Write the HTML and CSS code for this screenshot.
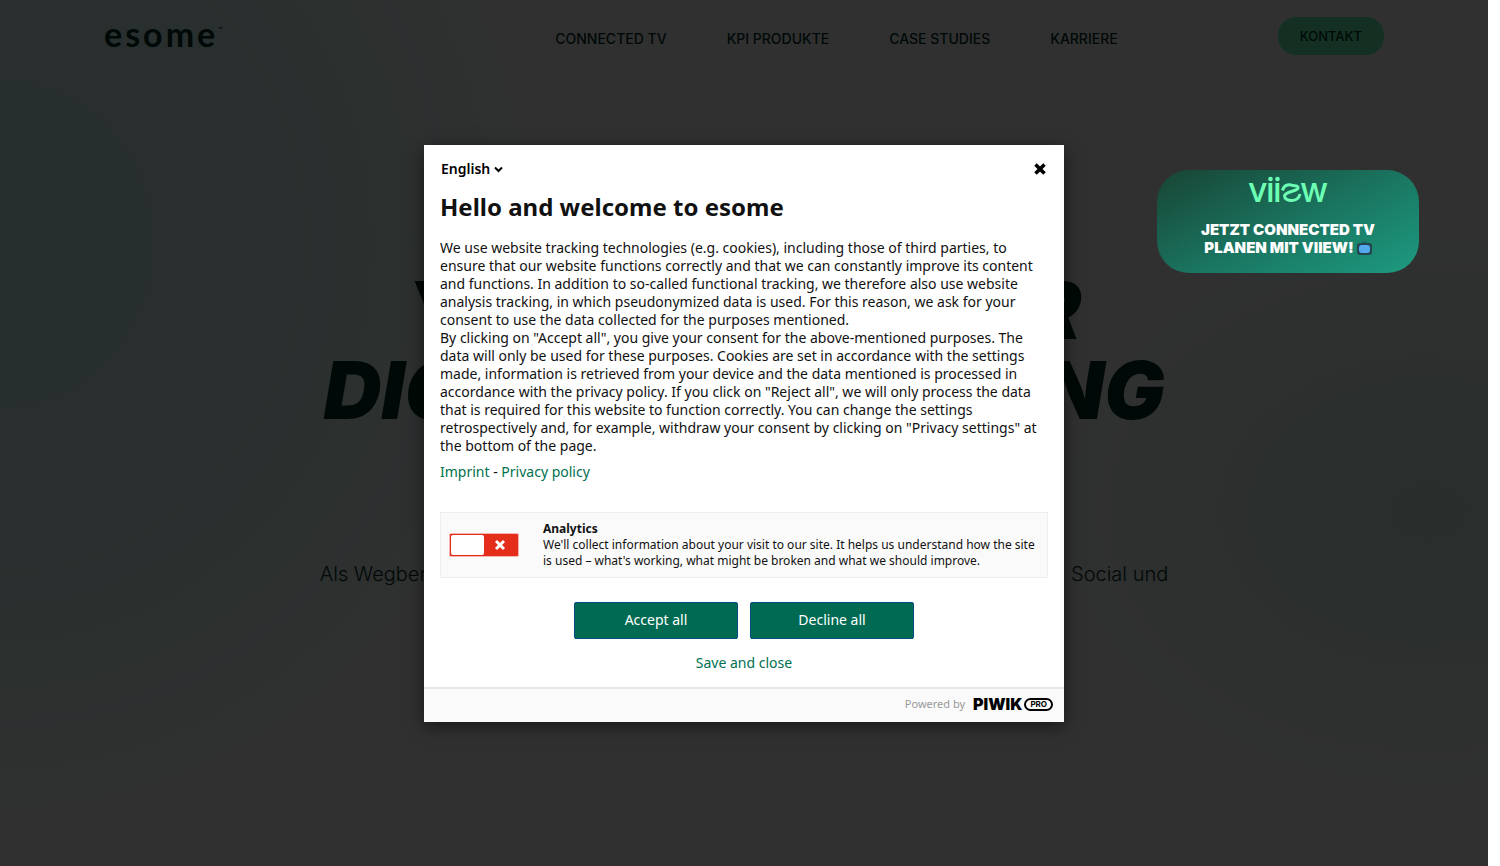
FILE: index.html
```html
<!DOCTYPE html>
<html lang="de">
<head>
    <meta charset="UTF-8">
    <meta name="viewport" content="width=device-width, initial-scale=1.0">
    <title>esome</title>
    <link rel="stylesheet" href="styles.css">
</head>
<body>
    <div class="page">
        <header class="header">
            <a class="logo" href="#">esome<sup>™</sup></a>
            <nav class="nav">
                <a href="#">CONNECTED TV</a>
                <a href="#">KPI PRODUKTE</a>
                <a href="#">CASE STUDIES</a>
                <a href="#">KARRIERE</a>
            </nav>
            <a class="contact" href="#">KONTAKT</a>
        </header>
        <main class="hero">
            <h1>YOUR GUIDE FOR<br>DIGITAL MARKETING</h1>
            <p>Als Wegbereiter der digitalen Werbung verbinden wir Connected TV, Video, Paid Social und</p>
        </main>

        <div class="overlay">
            <div class="modal" role="dialog" aria-labelledby="consent-title" lang="en">
                <div class="modal-body">
                    <div class="modal-top">
                        <div class="language">
                            <select aria-label="Language">
                                <option>English</option>
                            </select>
                            <svg width="9" height="7" viewBox="0 0 9 7"><path d="M1 1.5l3.5 3.5 3.5-3.5" fill="none" stroke="#000" stroke-width="2"/></svg>
                        </div>
                        <button class="close" type="button" aria-label="Close">
                            <svg width="12" height="12" viewBox="0 0 12 12"><path d="M1.5 1.5l9 9M10.5 1.5l-9 9" stroke="#000" stroke-width="3.6"/></svg>
                        </button>
                    </div>
                    <h2 id="consent-title">Hello and welcome to esome</h2>
                    <p class="text">We use website tracking technologies (e.g. cookies), including those of third parties, to ensure that our website functions correctly and that we can constantly improve its content and functions. In addition to so-called functional tracking, we therefore also use website analysis tracking, in which pseudonymized data is used. For this reason, we ask for your consent to use the data collected for the purposes mentioned.<br>By clicking on "Accept all", you give your consent for the above-mentioned purposes. The data will only be used for these purposes. Cookies are set in accordance with the settings made, information is retrieved from your device and the data mentioned is processed in accordance with the privacy policy. If you click on "Reject all", we will only process the data that is required for this website to function correctly. You can change the settings retrospectively and, for example, withdraw your consent by clicking on "Privacy settings" at the bottom of the page.</p>
                    <p class="links"><a href="#">Imprint</a> - <a href="#">Privacy policy</a></p>
                    <div class="consent">
                        <label class="switch" for="analytics">
                            <input id="analytics" type="checkbox" aria-label="Analytics">
                            <span class="knob"></span>
                            <svg width="12" height="12" viewBox="0 0 12 12"><path d="M2 2l8 8M10 2l-8 8" stroke="#fff" stroke-width="3"/></svg>
                        </label>
                        <div class="consent-text">
                            <h3>Analytics</h3>
                            <p>We'll collect information about your visit to our site. It helps us understand how the site is used – what's working, what might be broken and what we should improve.</p>
                        </div>
                    </div>
                    <div class="buttons">
                        <button type="button">Accept all</button>
                        <button type="button">Decline all</button>
                    </div>
                    <button class="save" type="button">Save and close</button>
                </div>
                <footer class="modal-footer">
                    <span>Powered by</span>
                    <a class="piwik" href="#">PIWIK<span class="pro">PRO</span></a>
                </footer>
            </div>
        </div>

        <a class="viiew" href="#">
            <svg class="viiew-logo" width="80" height="44" viewBox="0 -6 80 44" role="img" aria-label="viiew">
                <g font-family="Inter, sans-serif" font-size="34" font-weight="500" fill="#6dffb4">
                    <text x="0" y="26">v</text>
                    <text x="18" y="26">ı</text>
                    <text x="25" y="26">ı</text>
                    <text x="52" y="26">w</text>
                </g>
                <circle cx="22.5" cy="3" r="2.3" fill="#6dffb4"/>
                <circle cx="29.5" cy="3" r="2.3" fill="#6dffb4"/>
                <path d="M34.500 14.500C36 9 40 8 43 9C46 10.500 50 8.500 50 12C49.500 15.500 37 15 36.500 20C36.500 23 40 24.600 44 24.500C48 24.400 51 22 52 18" fill="none" stroke="#6dffb4" stroke-width="3"/>
            </svg>
            <span>JETZT CONNECTED TV</span>
            <span>PLANEN MIT VIIEW!
                <svg width="15" height="15" viewBox="0 0 15 15"><path d="M5 0l2 2 3-2" fill="none" stroke="#24505a"/><rect y="2" width="15" height="12" rx="3" fill="#234650"/><rect x="2" y="4" width="11" height="8" rx="3" fill="#55a9ee"/></svg>
            </span>
        </a>
    </div>
</body>
</html>
```
FILE: styles.css
```css
* {
    box-sizing: border-box;
}
body {
    margin: 0;
    /* scrollbar gutter */
    padding-right: 12px;
    background-color: white;
    font-family: Inter, sans-serif;
}
a {
    text-decoration: none;
    color: inherit;
}
button {
    font-family: inherit;
    cursor: pointer;
}
h1, h2, h3, p {
    margin: 0;
}
.page {
    position: relative;
    min-height: 100vh;
    overflow: hidden;
    color: #003328;
    background:
        radial-gradient(ellipse 560px 600px at 0% 28%, #c8f8f0, rgba(200, 248, 240, 0.7) 50%, rgba(255, 255, 255, 0)),
        radial-gradient(ellipse 400px 300px at 96% 59%, #d0f5e6, rgba(255, 255, 255, 0)),
        white;
}

/* header */
.header {
    display: flex;
    align-items: center;
    height: 72px;
    padding: 0 104px;
}
.logo {
    padding-bottom: 4px;
    font-family: Lato, sans-serif;
    font-size: 34px;
    line-height: 40px;
    font-weight: 700;
    letter-spacing: 3px;
}
.logo sup {
    font-size: 6px;
    line-height: 0;
    letter-spacing: 0;
    vertical-align: 16px;
}
.nav {
    display: flex;
    gap: 60px;
    margin-left: auto;
    margin-right: 160px;
    padding-top: 4px;
    font-size: 14px;
    font-weight: 500;
}
.contact {
    padding: 11px 22px;
    border-radius: 18px;
    background-color: #6cffb8;
    font-size: 13px;
    font-weight: 500;
    line-height: 16px;
}

/* hero */
.hero {
    padding-top: 198px;
    text-align: center;
}
.hero h1 {
    font-size: 80px;
    line-height: 80px;
    font-weight: 900;
    font-style: italic;
    white-space: nowrap;
}
.hero p {
    margin-top: 132px;
    font-size: 20px;
    line-height: 24px;
    font-weight: 300;
}

/* consent dialog */
.overlay {
    position: absolute;
    inset: 0;
    display: flex;
    align-items: center;
    justify-content: center;
    background-color: rgba(0, 0, 0, 0.81);
}
.modal {
    width: 640px;
    max-width: 100%;
    margin-top: 1px;
    background-color: white;
    box-shadow: 0 4px 16px rgba(0, 0, 0, 0.5);
    color: #111;
    font-family: "Noto Sans", sans-serif;
    font-size: 14px;
    line-height: 18px;
}
.modal-body {
    padding: 15px 16px 14px;
}
.modal-top {
    display: flex;
    align-items: center;
    justify-content: space-between;
    height: 18px;
}
.language {
    display: flex;
    align-items: center;
    gap: 3px;
}
.language select {
    appearance: none;
    border: none;
    padding: 0 0 0 1px;
    background: none;
    font: inherit;
    font-weight: 600;
    color: black;
}
.close {
    display: flex;
    padding: 2px;
    border: none;
    background: none;
}
.modal h2 {
    margin-top: 11px;
    font-size: 24px;
    line-height: 36px;
}
.text {
    margin-top: 14px;
}
.links {
    margin-top: 8px;
}
.links a, .save {
    color: #00704f;
}
.consent {
    display: flex;
    align-items: center;
    margin-top: 31px;
    padding: 8px;
    border: 1px solid #eee;
    background-color: #fafafa;
}
.switch {
    display: flex;
    align-items: center;
    flex-shrink: 0;
    width: 70px;
    height: 24px;
    padding: 1px;
    border: 1px solid #f3b5ae;
    border-radius: 2px;
    background-color: #e52e1a;
    cursor: pointer;
}
.switch input {
    appearance: none;
    width: 0;
    margin: 0;
}
.switch .knob {
    width: 33px;
    height: 20px;
    border-radius: 2px;
    background-color: white;
}
.switch svg {
    margin-left: 10px;
}
.switch:has(input:checked) {
    flex-direction: row-reverse;
    background-color: #00704f;
}
.consent-text {
    margin-left: 24px;
    font-size: 12px;
    line-height: 16px;
}
.consent-text h3 {
    font-size: 12px;
}
.buttons {
    display: flex;
    justify-content: center;
    gap: 12px;
    margin-top: 24px;
}
.buttons button {
    width: 164px;
    height: 37px;
    padding-bottom: 4px;
    border: 1px solid #004e80;
    border-radius: 2px;
    background-color: #006b52;
    color: white;
    font-size: 14px;
}
.save {
    display: block;
    margin: 14px auto 0;
    padding: 0;
    border: none;
    background: none;
    font-size: 14px;
    line-height: 20px;
}
.modal-footer {
    display: flex;
    align-items: center;
    justify-content: flex-end;
    gap: 8px;
    height: 35px;
    padding: 0 11px 3px;
    border-top: 2px solid #e6e6e6;
    background-color: #fafafa;
    color: #999;
    font-size: 11px;
}
.piwik {
    display: flex;
    align-items: center;
    gap: 2px;
    color: black;
    font-family: Inter, sans-serif;
    font-size: 16px;
    font-weight: 900;
}
.pro {
    padding: 0 4px;
    border: 2px solid black;
    border-radius: 7px;
    font-size: 8px;
    font-weight: 700;
    line-height: 9px;
}

/* viiew teaser */
.viiew {
    position: absolute;
    top: 170px;
    right: 69px;
    display: flex;
    flex-direction: column;
    align-items: center;
    width: 262px;
    height: 103px;
    border-radius: 32px;
    background: linear-gradient(155deg, #184434, #1a7762 55%, #1d9b80);
    color: white;
    font-size: 15px;
    line-height: 18px;
    font-weight: 900;
}
.viiew-logo {
    margin-bottom: 7px;
}
.viiew span svg {
    vertical-align: -3px;
}
```
